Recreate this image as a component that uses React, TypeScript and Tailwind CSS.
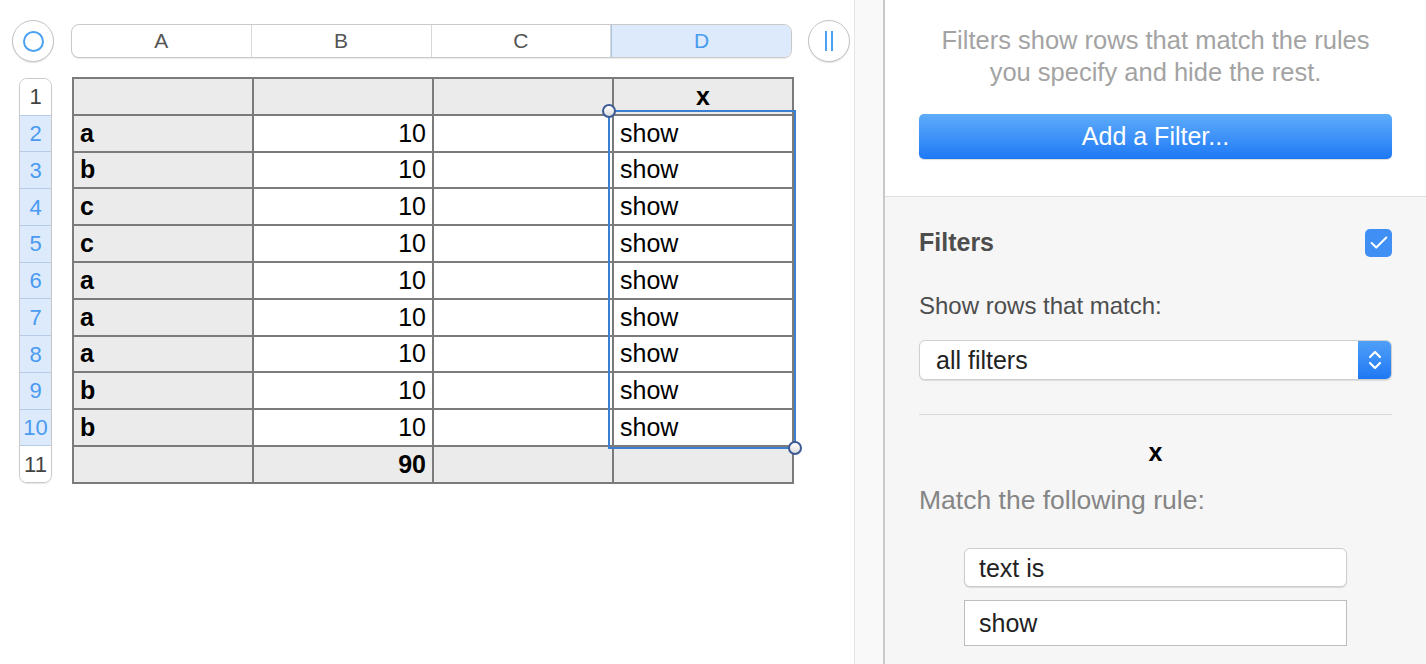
import { Check } from "lucide-react";

const rows: [string, string, string][] = [
  ["a", "10", "show"],
  ["b", "10", "show"],
  ["c", "10", "show"],
  ["c", "10", "show"],
  ["a", "10", "show"],
  ["a", "10", "show"],
  ["a", "10", "show"],
  ["b", "10", "show"],
  ["b", "10", "show"],
];

const cols = ["A", "B", "C", "D"];

const Handle = ({ className }: { className: string }) => (
  <div
    className={`absolute w-[14px] h-[14px] rounded-full border-2 border-[#3c5a96] bg-gradient-to-b from-white to-[#dcdcdc] ${className}`}
  />
);

const Sheet = () => {
  const cell = "flex items-center px-[6px] text-[25px] leading-none text-black";
  return (
    <div className="w-[855px] h-full bg-white border-r border-[#e6e6e6]">
      <div className="flex items-center mt-[19px] h-[44px]">
        <div className="ml-[12px] w-[42px] h-[42px] rounded-full border border-[#c4c4c4] bg-white shadow-[0_1px_1px_rgba(0,0,0,0.12)] flex items-center justify-center">
          <div className="w-[21px] h-[21px] rounded-full border-2 border-[#4ba1f2]" />
        </div>
        <div className="ml-[17px] w-[721px] h-[34px] rounded-[8px] border border-[#c9c9c9] bg-white shadow-[0_1px_1px_rgba(0,0,0,0.08)] flex overflow-hidden">
          {cols.map((c, i) => (
            <div
              key={c}
              className={`flex-1 flex items-center justify-center text-[21px] ${
                i < 3 ? "border-r border-[#d9d9d9] text-[#555]" : "bg-[#dceafc] text-[#4a9af0] border-l border-[#a9c4e6]"
              }`}
            >
              {c}
            </div>
          ))}
        </div>
        <div className="ml-[16px] w-[42px] h-[42px] rounded-full border border-[#c4c4c4] bg-white shadow-[0_1px_1px_rgba(0,0,0,0.12)] flex items-center justify-center gap-[4px]">
          <div className="w-[2px] h-[20px] bg-[#4ba1f2]" />
          <div className="w-[2px] h-[20px] bg-[#4ba1f2]" />
        </div>
      </div>

      <div className="flex mt-[14px]">
        <div className="ml-[19px] mt-[1px] w-[33px] h-[405px] rounded-[8px] border border-[#c9c9c9] overflow-hidden flex flex-col shadow-[0_1px_1px_rgba(0,0,0,0.1)]">
          {Array.from({ length: 11 }, (_, i) => {
            const sel = i > 0 && i < 10;
            return (
              <div
                key={i}
                className={`flex-1 flex items-center justify-center text-[22px] ${
                  i > 0 ? "border-t border-[#b7cbe4]" : ""
                } ${sel ? "bg-[#dceafc] text-[#4a9af0]" : "bg-white text-[#444]"}`}
              >
                {i + 1}
              </div>
            );
          })}
        </div>

        <div className="relative ml-[20px]">
          <div className="grid grid-cols-[178px_178px_178px_178px] grid-rows-[repeat(11,34.8px)] gap-[2px] p-[2px] bg-[#7b7b7b]">
            <div className="bg-[#ebebeb]" />
            <div className="bg-[#ebebeb]" />
            <div className="bg-[#ebebeb]" />
            <div className="bg-[#ebebeb] flex items-center justify-center text-[25px] font-bold text-black">x</div>
            {rows.map(([a, b, d], i) => (
              <div key={i} className="contents">
                <div className={`${cell} bg-[#ebebeb] font-bold`}>{a}</div>
                <div className={`${cell} bg-white justify-end`}>{b}</div>
                <div className="bg-white" />
                <div className={`${cell} bg-white`}>{d}</div>
              </div>
            ))}
            <div className="bg-[#ebebeb]" />
            <div className={`${cell} bg-[#ebebeb] justify-end font-bold`}>90</div>
            <div className="bg-[#ebebeb]" />
            <div className="bg-[#ebebeb]" />
          </div>
          <div className="absolute left-[536px] top-[33px] w-[188px] h-[339px] border-2 border-[#3a7fd0]">
            <Handle className="-left-[8px] -top-[8px]" />
            <Handle className="-right-[8px] -bottom-[8px]" />
          </div>
        </div>
      </div>
    </div>
  );
};

const Panel = () => (
  <div className="flex-1 h-full flex flex-col">
    <div className="h-[197px] bg-white border-b border-[#dedede] px-[34px] pt-[24px] flex flex-col">
      <p className="text-center text-[25.5px] leading-[32px] text-[#a3a3a3]">
        Filters show rows that match the rules
        <br />
        you specify and hide the rest.
      </p>
      <button className="mt-[26px] h-[45px] w-full rounded-[5px] bg-gradient-to-b from-[#5eacfa] to-[#1d78f5] text-white text-[25px] shadow-[0_1px_1px_rgba(0,0,0,0.15)]">
        Add a Filter...
      </button>
    </div>
    <div className="flex-1 bg-[#f6f6f6] px-[34px] flex flex-col">
      <div className="mt-[31px] h-[30px] flex items-center justify-between">
        <span className="text-[25px] font-bold text-[#4d4d4d]">Filters</span>
        <div className="w-[27px] h-[28px] rounded-[5px] bg-[#3f8ff5] flex items-center justify-center">
          <Check className="w-[22px] h-[22px] text-white" strokeWidth={2.2} />
        </div>
      </div>
      <div className="mt-[33px] h-[30px] flex items-center text-[24px] text-[#4d4d4d]">Show rows that match:</div>
      <div className="mt-[19px] h-[40px] rounded-[6px] border border-[#cfcfcf] bg-white flex overflow-hidden shadow-[0_1px_1px_rgba(0,0,0,0.1)]">
        <div className="flex-1 flex items-center pl-[16px] pt-[2px] text-[25px] text-[#222]">all filters</div>
        <div className="w-[33px] bg-gradient-to-b from-[#4f9ff8] to-[#1e78f4] flex items-center justify-center">
          <svg width="14" height="24" viewBox="0 0 14 24" fill="none" stroke="white" strokeWidth="2.2" strokeLinecap="round" strokeLinejoin="round">
            <polyline points="2,9 7,4 12,9" />
            <polyline points="2,15 7,20 12,15" />
          </svg>
        </div>
      </div>
      <div className="mt-[34px] h-px bg-[#d9d9d9]" />
      <div className="mt-[23px] h-[30px] flex items-center justify-center text-[25px] font-bold text-black">x</div>
      <div className="mt-[18px] h-[30px] flex items-center text-[26.5px] text-[#858585]">Match the following rule:</div>
      <div className="mt-[32px] mx-[45px] h-[39px] rounded-[6px] border border-[#cdcdcd] bg-white flex items-center pl-[14px] pt-[2px] text-[25px] text-[#222] shadow-[0_1px_1px_rgba(0,0,0,0.12)]">
        text is
      </div>
      <div className="mt-[13px] mx-[45px] h-[46px] border border-[#bdbdbd] bg-white flex items-center pl-[14px] pt-[2px] text-[25px] text-[#222]">
        show
      </div>
    </div>
  </div>
);

export default function App() {
  return (
    <div className="w-[1426px] h-[664px] flex overflow-hidden bg-white font-['Liberation_Sans',Arial,sans-serif]">
      <Sheet />
      <div className="w-[30px] h-full bg-[#f9f9f9] border-r-2 border-[#c9c9c9]" />
      <Panel />
    </div>
  );
}
